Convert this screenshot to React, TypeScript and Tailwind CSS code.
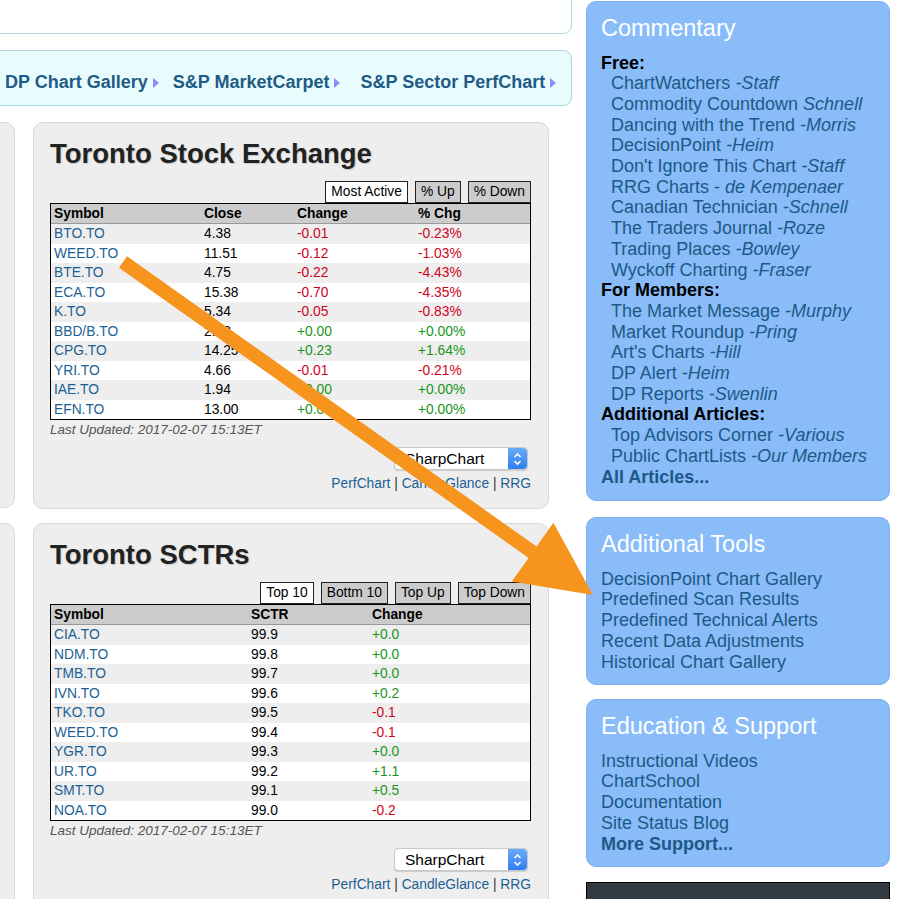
import React from "react";

type Row = string[];

const tseRows: Row[] = [
  ["BTO.TO", "4.38", "-0.01", "-0.23%"],
  ["WEED.TO", "11.51", "-0.12", "-1.03%"],
  ["BTE.TO", "4.75", "-0.22", "-4.43%"],
  ["ECA.TO", "15.38", "-0.70", "-4.35%"],
  ["K.TO", "5.34", "-0.05", "-0.83%"],
  ["BBD/B.TO", "2.48", "+0.00", "+0.00%"],
  ["CPG.TO", "14.25", "+0.23", "+1.64%"],
  ["YRI.TO", "4.66", "-0.01", "-0.21%"],
  ["IAE.TO", "1.94", "+0.00", "+0.00%"],
  ["EFN.TO", "13.00", "+0.00", "+0.00%"],
];

const sctrRows: Row[] = [
  ["CIA.TO", "99.9", "+0.0"],
  ["NDM.TO", "99.8", "+0.0"],
  ["TMB.TO", "99.7", "+0.0"],
  ["IVN.TO", "99.6", "+0.2"],
  ["TKO.TO", "99.5", "-0.1"],
  ["WEED.TO", "99.4", "-0.1"],
  ["YGR.TO", "99.3", "+0.0"],
  ["UR.TO", "99.2", "+1.1"],
  ["SMT.TO", "99.1", "+0.5"],
  ["NOA.TO", "99.0", "-0.2"],
];

function Triangle() {
  return (
    <svg width="6" height="10" viewBox="0 0 6 10" className="ml-[5px] mt-[2px]">
      <path d="M0 0 L6 5 L0 10 Z" fill="#8c8cf2" />
    </svg>
  );
}

function signColor(v: string) {
  return v.startsWith("-") ? "text-[#d0021b]" : "text-[#17961b]";
}

function Tabs({ items }: { items: string[] }) {
  return (
    <div className="flex justify-end items-end gap-[7px] mt-[11px] h-[23px]">
      {items.map((t, i) => (
        <div
          key={t}
          className={`h-[22px] px-[5px] flex items-center text-[13.8px] text-black border border-[#222] ${
            i === 0 ? "bg-white" : "bg-[#cccccc]"
          }`}
        >
          {t}
        </div>
      ))}
    </div>
  );
}

function DataTable({
  headers,
  rows,
  grid,
  colored,
}: {
  headers: string[];
  rows: Row[];
  grid: string;
  colored: number[];
}) {
  return (
    <div className="border border-black bg-white text-[13.8px]">
      <div className={`grid ${grid} h-[20px] items-center bg-[#cccccc] border-b border-[#999] font-bold text-black px-[3px]`}>
        {headers.map((h) => (
          <div key={h}>{h}</div>
        ))}
      </div>
      {rows.map((r, i) => (
        <div
          key={r[0]}
          className={`grid ${grid} h-[19.5px] items-center px-[3px] ${i % 2 === 0 ? "bg-[#eeeeee]" : "bg-white"}`}
        >
          {r.map((c, j) => (
            <div
              key={j}
              className={j === 0 ? "text-[#1c5f94]" : colored.includes(j) ? signColor(c) : "text-black"}
            >
              {c}
            </div>
          ))}
        </div>
      ))}
    </div>
  );
}

function SharpSelect() {
  return (
    <div className="flex justify-end mt-[9px] pr-[3px]">
      <div className="flex h-[23px] w-[134px] bg-white border border-[#c9c9c9] rounded-[4px] shadow-[0_1px_1px_rgba(0,0,0,0.15)]">
        <div className="flex-1 flex items-center pl-[10px] text-[15.5px] text-black">SharpChart</div>
        <div className="w-[19px] rounded-r-[4px] bg-gradient-to-b from-[#6aaaf9] to-[#2c7ef0] flex items-center justify-center">
          <svg width="9" height="14" viewBox="0 0 9 14">
            <path d="M1.5 5 L4.5 2 L7.5 5 M1.5 9 L4.5 12 L7.5 9" stroke="white" strokeWidth="1.6" fill="none" />
          </svg>
        </div>
      </div>
    </div>
  );
}

function ChartLinks() {
  return (
    <div className="mt-[5px] text-right text-[13.8px] leading-[17px] text-[#1c5f94]">
      PerfChart <span className="text-[#333]">|</span> CandleGlance <span className="text-[#333]">|</span> RRG
    </div>
  );
}

function MarketPanel({
  title,
  tabs,
  headers,
  rows,
  grid,
  colored,
  height,
}: {
  title: string;
  tabs: string[];
  headers: string[];
  rows: Row[];
  grid: string;
  colored: number[];
  height: string;
}) {
  return (
    <div className={`w-[516px] ${height} shrink-0 bg-[#eeeeee] border border-[#d9d9d9] rounded-[10px] pt-[15px] pl-[16px] pr-[17px]`}>
      <div className="text-[27.5px] leading-[32px] font-bold text-[#222] [text-shadow:1px_1px_1px_#c8c8c8]">{title}</div>
      <div className="-mt-[1px]">
        <Tabs items={tabs} />
      </div>
      <DataTable headers={headers} rows={rows} grid={grid} colored={colored} />
      <div className="mt-[2px] text-[13.5px] leading-[16px] italic text-[#555]">Last Updated: 2017-02-07 15:13ET</div>
      <SharpSelect />
      <ChartLinks />
    </div>
  );
}

function SideLink({ main, who, indent = true }: { main: string; who?: string; indent?: boolean }) {
  return (
    <div className={`${indent ? "pl-[10px]" : ""} text-[#1c5a85]`}>
      {main}
      {who && <i>{who}</i>}
    </div>
  );
}

function SidePanel({ title, children, className = "" }: { title: string; children: React.ReactNode; className?: string }) {
  return (
    <div className={`bg-[#89bcf9] border border-[#7db2f2] rounded-[10px] pt-[12px] pl-[14px] ${className}`}>
      <div className="text-[23.5px] leading-[28px] text-white mb-[10.5px]">{title}</div>
      <div className="text-[18px] leading-[20.7px]">{children}</div>
    </div>
  );
}

function Label({ children }: { children: React.ReactNode }) {
  return <div className="font-bold text-black">{children}</div>;
}

export default function App() {
  return (
    <div className="relative w-[900px] h-[899px] overflow-hidden bg-white font-['Liberation_Sans',Arial,Helvetica,sans-serif]">
      <div className="flex">
        <div className="w-[572px] shrink-0 overflow-hidden">
          <div className="-ml-[20px] -mt-[10px] h-[44px] bg-white border border-[#a9d7db] rounded-[9px]" />
          <div className="-ml-[20px] mt-[16px] h-[56px] bg-[#e8fcfd] border border-[#a9d7db] rounded-[9px] pl-[24px] pt-[8px] flex items-center text-[18px] font-bold text-[#1f5b86]">
            <span>DP Chart Gallery</span>
            <Triangle />
            <span className="ml-[14px]">S&amp;P MarketCarpet</span>
            <Triangle />
            <span className="ml-[20px]">S&amp;P Sector PerfChart</span>
            <Triangle />
          </div>
          <div className="flex gap-[18px] mt-[16px]">
            <div className="-ml-[40px] w-[55px] h-[386px] shrink-0 bg-[#eeeeee] border border-[#d9d9d9] rounded-[10px]" />
            <MarketPanel
              title="Toronto Stock Exchange"
              tabs={["Most Active", "% Up", "% Down"]}
              headers={["Symbol", "Close", "Change", "% Chg"]}
              rows={tseRows}
              grid="grid-cols-[150px_93px_121px_1fr]"
              colored={[2, 3]}
              height="h-[387px]"
            />
          </div>
          <div className="flex gap-[18px] mt-[14px]">
            <div className="-ml-[40px] w-[55px] h-[400px] shrink-0 bg-[#eeeeee] border border-[#d9d9d9] rounded-[10px]" />
            <MarketPanel
              title="Toronto SCTRs"
              tabs={["Top 10", "Bottm 10", "Top Up", "Top Down"]}
              headers={["Symbol", "SCTR", "Change"]}
              rows={sctrRows}
              grid="grid-cols-[197px_121px_1fr]"
              colored={[2]}
              height="h-[400px]"
            />
          </div>
        </div>

        <div className="ml-[14px] w-[304px] shrink-0 mt-[1px]">
          <SidePanel title="Commentary" className="pb-[13px]">
            <Label>Free:</Label>
            <SideLink main="ChartWatchers " who="-Staff" />
            <SideLink main="Commodity Countdown " who="Schnell" />
            <SideLink main="Dancing with the Trend " who="-Morris" />
            <SideLink main="DecisionPoint " who="-Heim" />
            <SideLink main="Don't Ignore This Chart " who="-Staff" />
            <SideLink main="RRG Charts - " who="de Kempenaer" />
            <SideLink main="Canadian Technician " who="-Schnell" />
            <SideLink main="The Traders Journal " who="-Roze" />
            <SideLink main="Trading Places " who="-Bowley" />
            <SideLink main="Wyckoff Charting " who="-Fraser" />
            <Label>For Members:</Label>
            <SideLink main="The Market Message " who="-Murphy" />
            <SideLink main="Market Roundup " who="-Pring" />
            <SideLink main="Art's Charts " who="-Hill" />
            <SideLink main="DP Alert " who="-Heim" />
            <SideLink main="DP Reports " who="-Swenlin" />
            <Label>Additional Articles:</Label>
            <SideLink main="Top Advisors Corner " who="-Various" />
            <SideLink main="Public ChartLists " who="-Our Members" />
            <div className="font-bold text-[#1c5a85]">All Articles...</div>
          </SidePanel>

          <SidePanel title="Additional Tools" className="mt-[16px] pb-[12px]">
            <SideLink main="DecisionPoint Chart Gallery" indent={false} />
            <SideLink main="Predefined Scan Results" indent={false} />
            <SideLink main="Predefined Technical Alerts" indent={false} />
            <SideLink main="Recent Data Adjustments" indent={false} />
            <SideLink main="Historical Chart Gallery" indent={false} />
          </SidePanel>

          <SidePanel title="Education &amp; Support" className="mt-[14px] pb-[12px]">
            <SideLink main="Instructional Videos" indent={false} />
            <SideLink main="ChartSchool" indent={false} />
            <SideLink main="Documentation" indent={false} />
            <SideLink main="Site Status Blog" indent={false} />
            <div className="font-bold text-[#1c5a85]">More Support...</div>
          </SidePanel>

          <div className="mt-[15px] h-[60px] bg-[#323941] border border-black" />
        </div>
      </div>

      <svg className="absolute left-0 top-0 pointer-events-none" width="900" height="899" viewBox="0 0 900 899">
        <polygon
          points="127,256.3 536.6,546.5 553.4,522.8 593,595 511.8,581.6 528.6,557.9 119,267.7"
          fill="#f7941e"
        />
      </svg>
    </div>
  );
}
